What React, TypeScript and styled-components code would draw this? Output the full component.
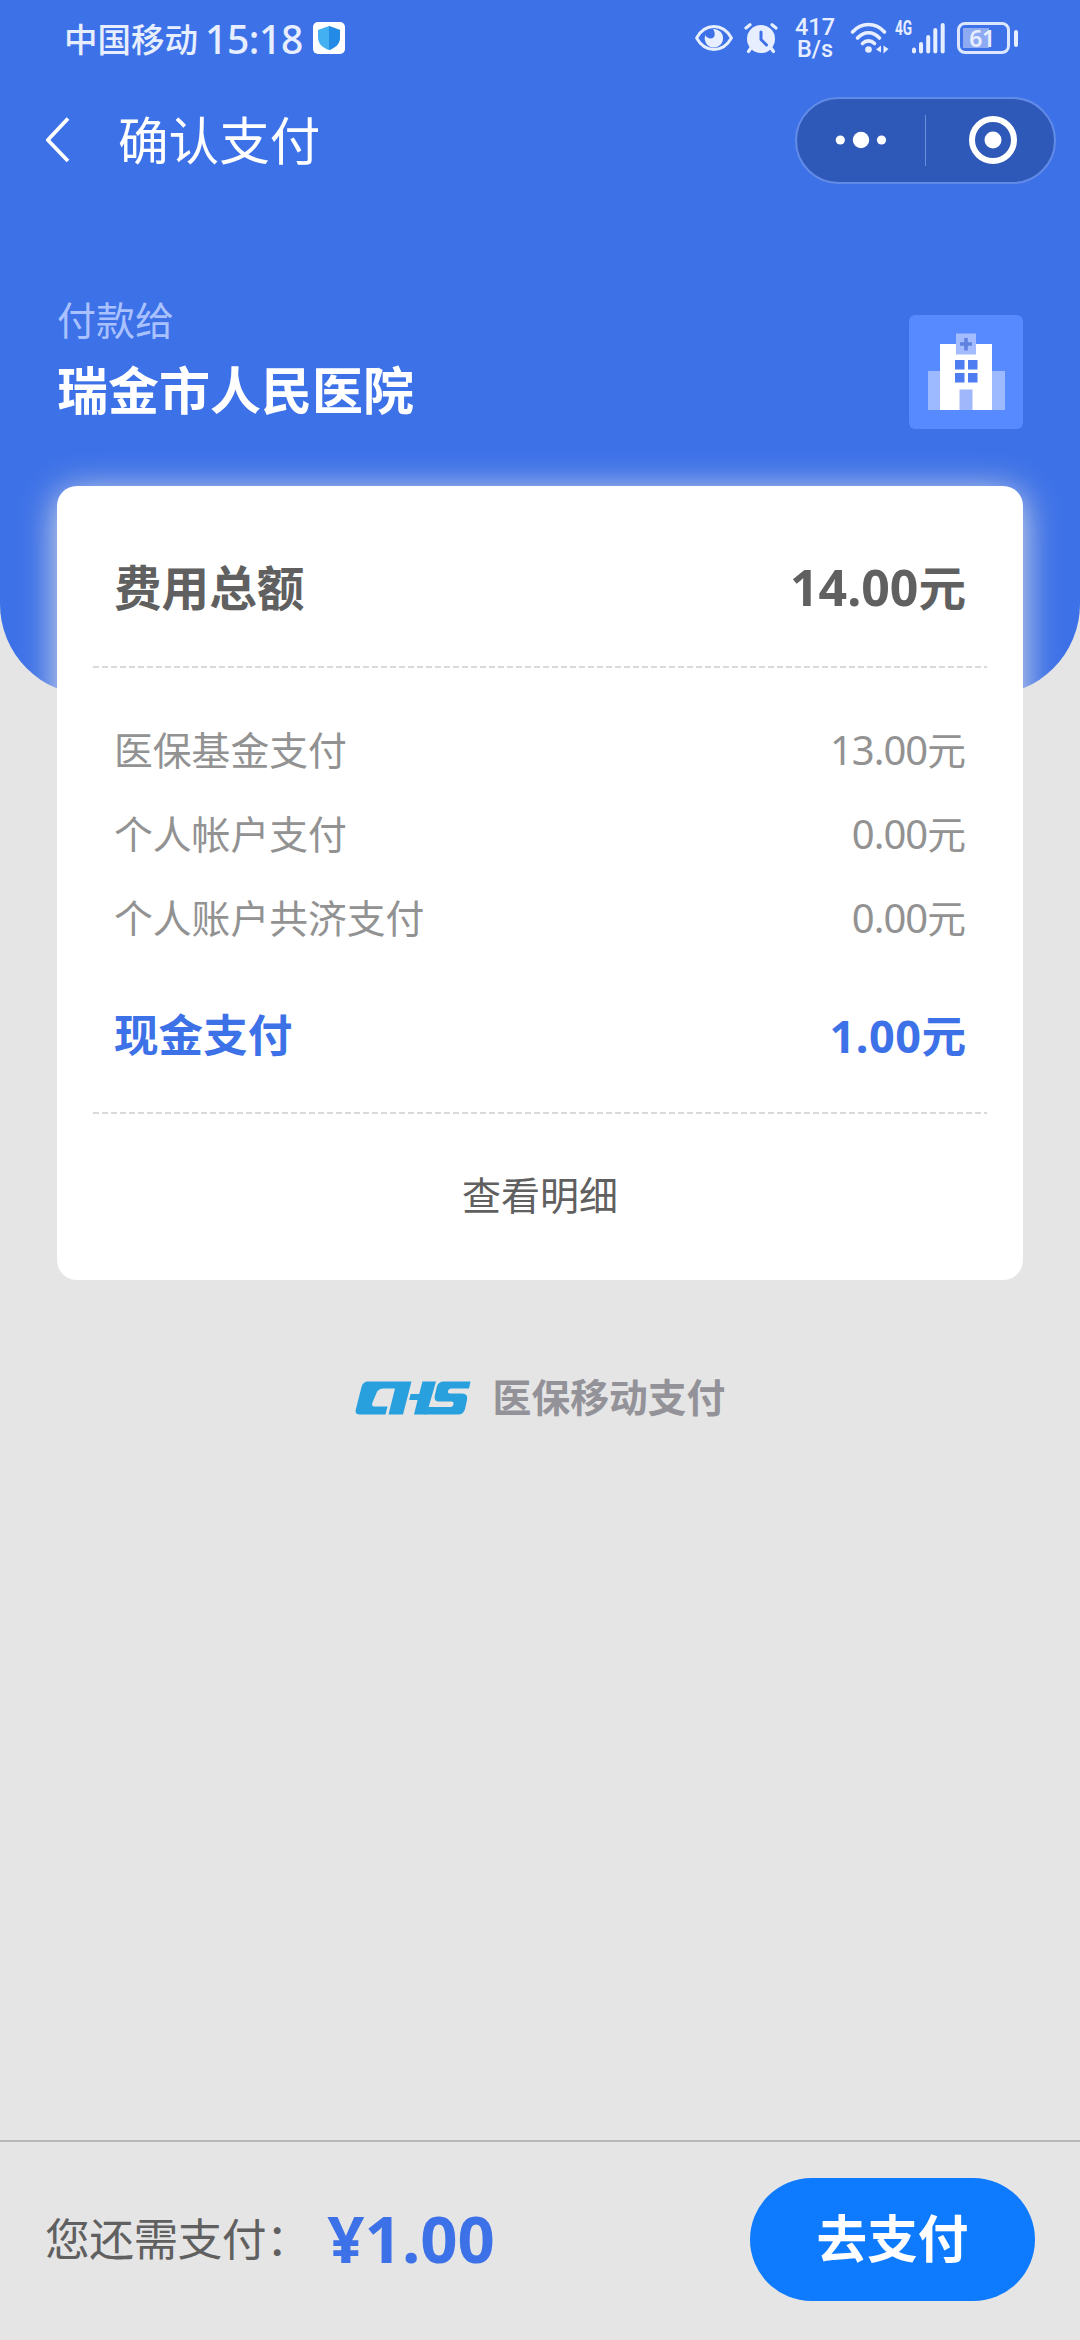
import React from "react";
import styled, { createGlobalStyle } from "styled-components";

const BLUE = "#3d71e7";
const GREY = "#e5e5e5";

const GlobalStyle = createGlobalStyle`
  * { box-sizing: border-box; }
  html, body { margin: 0; padding: 0; background: ${GREY}; }
  body { font-family: "Noto Sans CJK SC", sans-serif; line-height: 1; }
`;

const Page = styled.main`
  width: 1080px;
  height: 2340px;
  display: flex;
  flex-direction: column;
  overflow: hidden;
  background: ${GREY};
`;

const Hero = styled.header`
  flex: none;
  height: 695px;
  background: ${BLUE};
  border-radius: 0 0 91px 91px;
  color: #fff;
`;

const StatusBar = styled.div`
  height: 76px;
  display: flex;
  justify-content: space-between;
  padding: 0 62px 0 64px;
  color: #e6eeff;
`;

const StatusGroup = styled.div`
  display: flex;
  align-items: center;
  height: 76px;
`;

const Carrier = styled.span`
  font-size: 33.5px;
  font-weight: 500;
  white-space: nowrap;
`;

const Clock = styled.span`
  margin-left: 7px;
  width: 108px;
  font-family: "Noto Sans", sans-serif;
  font-size: 39px;
  font-weight: 500;
  letter-spacing: -0.4px;
`;

const Rate = styled.div`
  width: 40px;
  margin: 1px 15px 0 17px;
  font-family: "Roboto", sans-serif;
  font-size: 23.5px;
  font-weight: 500;
  line-height: 21.5px;
  text-align: center;
`;

const NavBar = styled.nav`
  height: 128px;
  display: flex;
  align-items: center;
  padding: 0 24px 0 44px;
`;

const NavTitle = styled.h1`
  flex: 1;
  margin: 0 0 4px 46px;
  font-size: 50.6px;
  font-weight: 400;
  line-height: 60px;
`;

const Capsule = styled.div`
  width: 261px;
  height: 87px;
  border: 2px solid #628be8;
  border-radius: 44px;
  background: #2f59b8;
  display: flex;
  align-items: center;
`;

const CapsuleHalf = styled.div<{ $shift?: number }>`
  width: 128px;
  display: flex;
  justify-content: center;
  padding-left: ${(p) => p.$shift ?? 0}px;
`;

const CapsuleRule = styled.span`
  width: 1px;
  height: 51px;
  background: #6c8fdc;
`;

const Payee = styled.section`
  display: flex;
  justify-content: space-between;
  align-items: center;
  height: 136px;
  margin-top: 100px;
  padding: 0 57px;
`;

const PayeeText = styled.div`
  display: flex;
  flex-direction: column;
  padding-bottom: 30px;
`;

const PayeeCaption = styled.span`
  font-size: 39px;
  line-height: 44px;
  color: #a9c2ff;
`;

const PayeeName = styled.strong`
  margin-top: 18px;
  font-size: 51px;
  font-weight: 700;
  line-height: 60px;
`;

const Card = styled.section`
  position: relative;
  flex: none;
  width: 966px;
  height: 794px;
  margin: -209px auto 0;
  border-radius: 20px;
  background: #fff;
  box-shadow: 0 6px 36px ${GREY};
  display: flex;
  flex-direction: column;
  padding: 0 36px;
`;

const Divider = styled.hr`
  flex: none;
  width: 100%;
  height: 2px;
  margin: 0;
  border: 0;
  background: repeating-linear-gradient(90deg, #d9d9d9 0 6px, transparent 6px 9px);
`;

const FeeRow = styled.div<{ $height: number; $size: number; $color: string; $bold?: boolean; $top?: number }>`
  display: flex;
  flex: none;
  justify-content: space-between;
  align-items: center;
  height: ${(p) => p.$height}px;
  padding: ${(p) => p.$top ?? 0}px 21px 0;
  font-size: ${(p) => p.$size}px;
  font-weight: ${(p) => (p.$bold ? 700 : 400)};
  color: ${(p) => p.$color};
`;

const Amount = styled.span<{ $size: number; $spacing?: number }>`
  display: flex;
  align-items: baseline;
  padding-top: 2px;
  span {
    font-family: "Noto Sans", sans-serif;
    font-size: ${(p) => p.$size}px;
    letter-spacing: ${(p) => p.$spacing ?? 0}px;
  }
`;

const FeeList = styled.div`
  height: 444px;
  padding-top: 38px;
`;

const DetailButton = styled.button`
  flex: 1;
  border: 0;
  background: none;
  padding: 0 0 7px;
  font: 400 39px/1 "Noto Sans CJK SC", sans-serif;
  color: #606060;
`;

const Brand = styled.div`
  flex: none;
  display: flex;
  justify-content: center;
  align-items: center;
  gap: 22px;
  height: 60px;
  margin-top: 88px;
  font-size: 38.8px;
  font-weight: 700;
  color: #929298;
`;

const BrandName = styled.span`
  padding-bottom: 6px;
`;

const Footer = styled.footer`
  display: flex;
  align-items: center;
  flex: none;
  height: 200px;
  margin-top: auto;
  border-top: 2px solid #b5b8b5;
  padding: 0 45px 4px 45px;
`;

const DueLabel = styled.span`
  padding-bottom: 4px;
  font-size: 44.8px;
  letter-spacing: -0.6px;
  color: #606060;
  white-space: nowrap;
`;

const DueAmount = styled.strong`
  flex: 1;
  margin-left: 17px;
  padding-bottom: 3px;
  font-family: "Noto Sans", sans-serif;
  font-size: 65.3px;
  font-weight: 700;
  color: ${BLUE};
`;

const PayButton = styled.button`
  width: 285px;
  height: 123px;
  border: 0;
  border-radius: 62px;
  background: #0e7bff;
  color: #fff;
  padding: 0 0 6px;
  font: 700 50.6px/1 "Noto Sans CJK SC", sans-serif;
`;

const ShieldIcon = () => (
  <svg width="32" height="32" viewBox="0 0 32 32">
    <rect width="32" height="32" rx="5" fill="#fff" />
    <path d="M16 4 L27 8 V15 C27 22 22 26 16 28 C10 26 5 22 5 15 V8 Z" fill="#43b0f2" />
    <path d="M16 4 L27 8 V15 C27 22 22 26 16 28 Z" fill="#238ae6" />
  </svg>
);

const StatusIcon = styled.svg<{ $gap?: number }>`
  flex: none;
  margin-left: ${(p) => p.$gap ?? 0}px;
  overflow: visible;
`;

const EyeIcon = () => (
  <StatusIcon width="38" height="26" viewBox="0 0 38 26">
    <path d="M1.6 13 C10 -2.2 28 -2.2 36.4 13 C28 28.2 10 28.2 1.6 13 Z" fill="none" stroke="#e6eeff" strokeWidth="3" strokeLinejoin="round" />
    <path d="M18 4 A9.2 9.2 0 1 1 10.2 10 C12 14 18.5 15 19.6 10.5 C20 8 19.4 6 18 4 Z" fill="#e6eeff" />
  </StatusIcon>
);

const AlarmIcon = () => (
  <StatusIcon $gap={11} width="34" height="31" viewBox="0 0 34 31">
    <g stroke="#e6eeff" strokeLinecap="round" fill="none">
      <path d="M2 5 L6 1.8 M32 5 L28 1.8" strokeWidth="3.2" />
      <path d="M7 25 L4.5 28.5 M27 25 L29.5 28.5" strokeWidth="3.2" />
    </g>
    <circle cx="17" cy="16" r="14" fill="#e6eeff" />
    <path d="M17 9 V16.5 L22.5 22" fill="none" stroke={BLUE} strokeWidth="3" strokeLinecap="round" strokeLinejoin="round" />
  </StatusIcon>
);

const WifiIcon = () => (
  <StatusIcon width="38" height="32" viewBox="0 0 38 32">
    <g fill="none" stroke="#e6eeff" strokeWidth="3.6" strokeLinecap="round">
      <path d="M2.5 10 C11.5 0 25.5 0 34.5 10" />
      <path d="M7.5 16 C14 9 23 9 29.5 16" />
      <path d="M12.5 21.5 C16 18 21 18 24.5 21.5" />
    </g>
    <circle cx="18.5" cy="27.5" r="3.3" fill="#e6eeff" />
    <path d="M31 23.5 V30.5 L26 27.5 Z M33.5 23.5 V31.5 L38.5 27 Z" fill="#e6eeff" />
  </StatusIcon>
);

const Network = styled.span`
  align-self: flex-start;
  margin: 19px 0 0 7px;
  width: 17px;
  font-family: "Roboto", sans-serif;
  font-size: 19.5px;
  font-weight: 700;
  white-space: nowrap;
  line-height: 20px;
  transform: scaleX(0.7);
  transform-origin: left;
`;

const SignalIcon = () => (
  <StatusIcon $gap={0} width="33" height="31" viewBox="0 0 33 31">
    <g fill="#e6eeff">
      <rect x="0" y="24.5" width="4" height="6" rx="2" />
      <rect x="7" y="19" width="4" height="11.5" rx="2" />
      <rect x="14.2" y="12" width="4" height="18.5" rx="2" />
      <rect x="21.3" y="5" width="4" height="25.5" rx="2" />
      <rect x="28.7" y="0" width="4" height="30.5" rx="2" />
    </g>
  </StatusIcon>
);

const Battery = styled.div`
  display: flex;
  align-items: center;
  gap: 4px;
  margin-left: 12px;
  &::after {
    content: "";
    width: 4px;
    height: 17px;
    border-radius: 2px;
    background: #e6eeff;
  }
`;

const BatteryBody = styled.div`
  width: 53px;
  height: 32px;
  border: 3px solid #dce7ff;
  border-radius: 8px;
  display: flex;
  align-items: center;
  justify-content: center;
  padding-right: 3px;
  background: linear-gradient(#8eaaf2, #8eaaf2) 3px 3px / 26px 20px no-repeat;
  font-family: "Noto Sans", sans-serif;
  font-size: 23px;
  font-weight: 600;
  letter-spacing: -0.5px;
`;

const BackIcon = () => (
  <svg width="28" height="48" viewBox="0 0 28 48">
    <path d="M24 2.5 L3.8 24 L24 45" fill="none" stroke="#fff" strokeWidth="3.8" strokeLinejoin="round" />
  </svg>
);

const MoreIcon = () => (
  <svg width="52" height="18" viewBox="0 0 52 18">
    <circle cx="5.3" cy="9" r="4.6" fill="#fff" />
    <circle cx="26" cy="9" r="8.2" fill="#fff" />
    <circle cx="46.5" cy="9" r="4.6" fill="#fff" />
  </svg>
);

const CloseRingIcon = () => (
  <svg width="48" height="48" viewBox="0 0 48 48">
    <circle cx="24" cy="24" r="21" fill="none" stroke="#fff" strokeWidth="6" />
    <circle cx="24" cy="24" r="8.5" fill="#fff" />
  </svg>
);

const HospitalIcon = () => (
  <svg width="114" height="114" viewBox="0 0 114 114">
    <rect width="114" height="114" rx="6" fill="#588aff" />
    <rect x="19" y="56" width="77" height="39" fill="#9db9ff" />
    <rect x="31" y="29" width="52" height="66" fill="#fff" />
    <rect x="47" y="18.5" width="20" height="21" fill="#a3bbff" />
    <path d="M57 23 V35.5 M51 29 H63" stroke="#5f82df" strokeWidth="3.6" />
    <g fill="#4d7df0">
      <rect x="46" y="45" width="9.5" height="9.5" />
      <rect x="59" y="45" width="9.5" height="9.5" />
      <rect x="46" y="58" width="9.5" height="9.5" />
      <rect x="59" y="58" width="9.5" height="9.5" />
    </g>
    <rect x="50.5" y="74.5" width="13" height="20.5" fill="#a0b8fb" />
  </svg>
);

const InsuranceLogo = () => (
  <svg width="116" height="34" viewBox="0 0 116 34">
    <g fill="#29a0de">
      <path d="M13 0.5 H56.5 L48 33.5 H33.5 L40 7.5 H29 Q23 7.5 21.5 12 L17.5 21.5 Q16 25.5 20 25.5 H32.5 L30.5 33.5 H5 Q-0.5 33.5 0.8 28.5 L6.5 6 Q8 0.5 13 0.5 Z" />
      <path d="M67.5 0.5 H81 L71.5 33.5 H59 L62.6 19 H54.2 L55.6 13 H64.2 Z" />
      <path d="M89 0.5 H115.5 L114 7.5 H96 Q93.5 7.5 93 10 Q92.5 12.5 95 12.5 H107 Q113.5 12.5 112 19 L110 28 Q108.5 33.5 103 33.5 H69.5 L72 26 H95.5 Q98 26 98.5 23 Q98.8 20.5 96.5 20.5 H84 Q78.5 20.5 79.8 14.5 L81.8 6 Q83 0.5 89 0.5 Z" />
    </g>
  </svg>
);

const ITEMS = [
  { label: "医保基金支付", value: "13.00" },
  { label: "个人帐户支付", value: "0.00" },
  { label: "个人账户共济支付", value: "0.00" },
];

export default function App() {
  return (
    <Page>
      <GlobalStyle />
      <Hero>
        <StatusBar>
          <StatusGroup>
            <Carrier>中国移动</Carrier>
            <Clock>15:18</Clock>
            <ShieldIcon />
          </StatusGroup>
          <StatusGroup>
            <EyeIcon />
            <AlarmIcon />
            <Rate>417 B/s</Rate>
            <WifiIcon />
            <Network>4G</Network>
            <SignalIcon />
            <Battery>
              <BatteryBody>61</BatteryBody>
            </Battery>
          </StatusGroup>
        </StatusBar>
        <NavBar>
          <BackIcon />
          <NavTitle>确认支付</NavTitle>
          <Capsule>
            <CapsuleHalf>
              <MoreIcon />
            </CapsuleHalf>
            <CapsuleRule />
            <CapsuleHalf $shift={6}>
              <CloseRingIcon />
            </CapsuleHalf>
          </Capsule>
        </NavBar>
        <Payee>
          <PayeeText>
            <PayeeCaption>付款给</PayeeCaption>
            <PayeeName>瑞金市人民医院</PayeeName>
          </PayeeText>
          <HospitalIcon />
        </Payee>
      </Hero>
      <Card>
        <FeeRow $height={180} $top={19} $size={47.6} $color="#606060" $bold>
          费用总额
          <Amount $size={50}>
            <span>14.00</span>元
          </Amount>
        </FeeRow>
        <Divider />
        <FeeList>
          {ITEMS.map((item) => (
            <FeeRow key={item.label} $height={84} $size={38.8} $color="#929292">
              {item.label}
              <Amount $size={40} $spacing={-1}>
                <span>{item.value}</span>元
              </Amount>
            </FeeRow>
          ))}
          <FeeRow $height={120} $top={31} $size={44.6} $color={BLUE} $bold>
            现金支付
            <Amount $size={45} $spacing={0.5}>
              <span>1.00</span>元
            </Amount>
          </FeeRow>
        </FeeList>
        <Divider />
        <DetailButton>查看明细</DetailButton>
      </Card>
      <Brand>
        <InsuranceLogo />
        <BrandName>医保移动支付</BrandName>
      </Brand>
      <Footer>
        <DueLabel>您还需支付：</DueLabel>
        <DueAmount>¥1.00</DueAmount>
        <PayButton>去支付</PayButton>
      </Footer>
    </Page>
  );
}
